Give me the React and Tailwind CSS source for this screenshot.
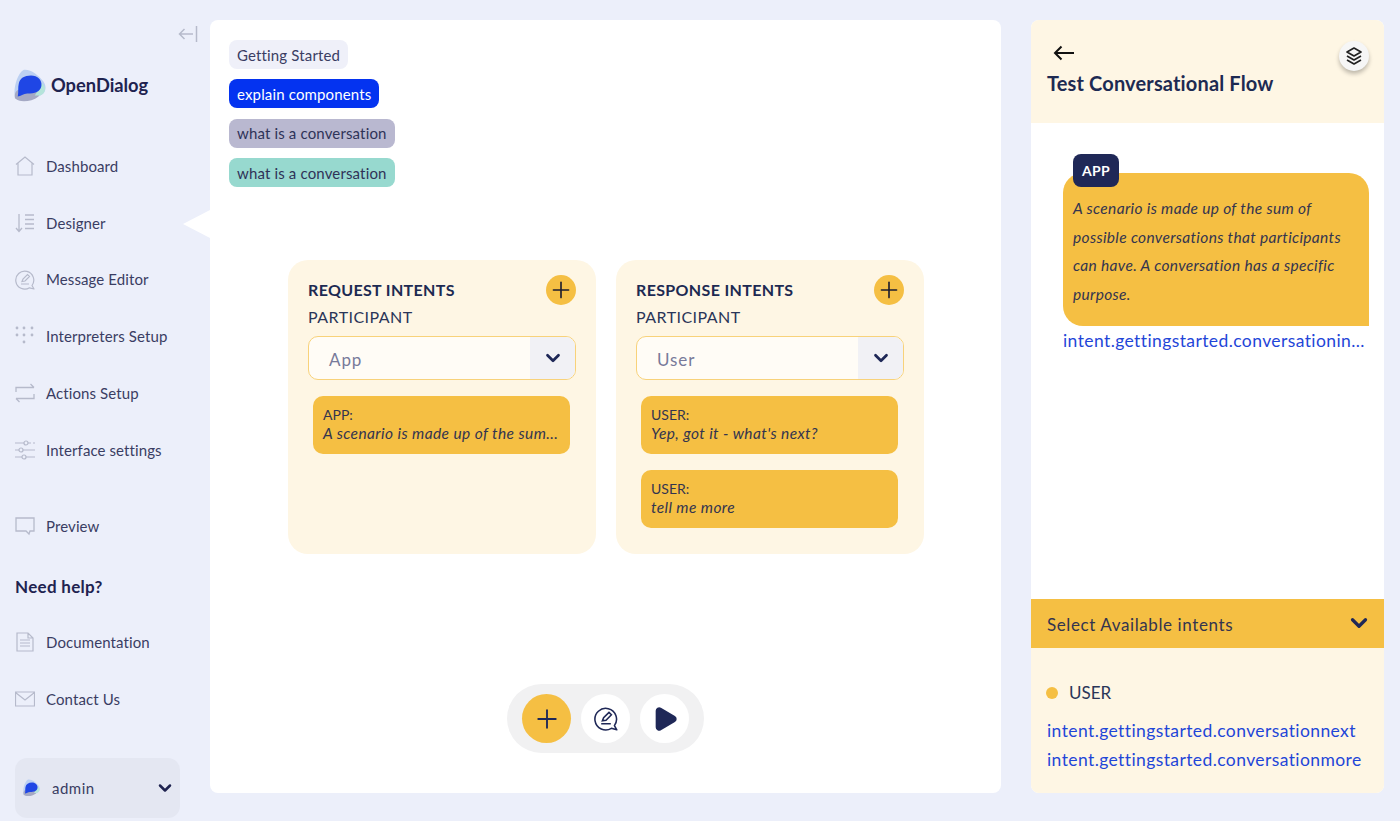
import { ChevronDown, Plus, Play } from 'lucide-react'

function Logo({ size = 36 }) {
  return (
    <svg width={size} height={size} viewBox="0 0 36 36" className="shrink-0">
      <path d="M10 1 C18 0 25 6 31 13 C36 20 33 28 24 29 C15 33 5 36 1 30 C-1 22 3 5 10 1Z" fill="#bcd0f2" />
      <path d="M1 31 C0 24 4 20 10 22 C18 22 30 22 26 29 C18 35 6 36 1 31Z" fill="#a5a9c4" />
      <path d="M30 15 C34 19 34 25 28 28 L22 28 Z" fill="#b5e4da" />
      <path d="M18 7 C25 7 30 12 29 18 C28 24 22 26 14 26 C10 26 7 29 4 29 C5 24 4 20 5 16 C6 10 11 7 18 7Z" fill="#1f46e5" />
    </svg>
  )
}

function HouseIcon() {
  return (
    <svg width="20" height="20" viewBox="0 0 20 20" fill="none" stroke="#b6bacb" strokeWidth="1.2">
      <path d="M1 8.5 10 1l9 7.5M3 7v12h14V7" />
    </svg>
  )
}
function DesignerIcon() {
  return (
    <svg width="20" height="20" viewBox="0 0 20 20" fill="none" stroke="#b6bacb" strokeWidth="1.3">
      <path d="M4 1v17M1 15l3 3.5L7 15M10 2h9M10 6.5h9M10 11h9M10 15.5h9" />
    </svg>
  )
}
function MessageIcon({ color = '#b6bacb', size = 20, w = 1.2 }) {
  return (
    <svg width={size} height={size} viewBox="0 0 20 20" fill="none" stroke={color} strokeWidth={w}>
      <path d="M17 15.5A9 9 0 1 0 14.5 17.8L19 19Z" strokeLinejoin="round" />
      <path d="M6 14h8M7 11.5l1-2.5 4.5-4.5 2 2L10 11Z" />
    </svg>
  )
}
function DotsIcon() {
  return (
    <svg width="20" height="20" viewBox="0 0 20 20" fill="#b6bacb">
      {[1.5, 8.5, 16.5].map(x => <circle key={x} cx={x + 0.5} cy="2" r="1.4" />)}
      {[1.5, 8.5, 16.5].map(x => <circle key={x} cx={x + 0.5} cy="9" r="1.4" />)}
      <circle cx="9" cy="16" r="1.4" />
    </svg>
  )
}
function SwapIcon() {
  return (
    <svg width="20" height="20" viewBox="0 0 20 20" fill="none" stroke="#b6bacb" strokeWidth="1.3">
      <path d="M1 9V4.5h18M15.5 1 19 4.5 M19 11v4.5H1M4.5 19 1 15.5" />
    </svg>
  )
}
function SlidersIcon() {
  return (
    <svg width="20" height="20" viewBox="0 0 20 20" fill="none" stroke="#b6bacb" strokeWidth="1.2">
      <path d="M0 3h9M13 3h3M18 3h2M0 10h4M8 10h12M0 17h7M11 17h9" />
      <circle cx="11" cy="3" r="2" /><circle cx="6" cy="10" r="2" /><circle cx="9" cy="17" r="2" />
    </svg>
  )
}
function ChatIcon() {
  return (
    <svg width="20" height="20" viewBox="0 0 20 20" fill="none" stroke="#b6bacb" strokeWidth="1.3">
      <path d="M1 2h18v13h-4l-1 3-3-3H1Z" />
    </svg>
  )
}
function DocIcon() {
  return (
    <svg width="20" height="20" viewBox="0 0 20 20" fill="none" stroke="#b6bacb" strokeWidth="1.2">
      <path d="M2 1h11l5 5v13H2ZM13 1v5h5M5 8h10M5 11h10M5 14h10" />
    </svg>
  )
}
function MailIcon() {
  return (
    <svg width="20" height="20" viewBox="0 0 20 20" fill="none" stroke="#b6bacb" strokeWidth="1.2">
      <path d="M0.5 3h19v14H0.5ZM0.5 3.5 10 11l9.5-7.5" />
    </svg>
  )
}
function StackIcon() {
  return (
    <svg width="18" height="19" viewBox="0 0 18 19" fill="none" stroke="#222" strokeWidth="1.7" strokeLinejoin="round">
      <path d="M9 1 16 5 9 9 2 5Z" />
      <path d="M2 9l7 4 7-4M2 13l7 4 7-4" />
    </svg>
  )
}
function BackArrow() {
  return (
    <svg width="22" height="16" viewBox="0 0 22 16" fill="none" stroke="#111" strokeWidth="2">
      <path d="M21 8H2M8.5 1.5 2 8l6.5 6.5" />
    </svg>
  )
}

function NavItem({ icon, label, className = '' }) {
  return (
    <div className={`flex items-center h-[20px] gap-[11px] pl-[15px] text-[15px] tracking-[0.1px] text-[#3a3d63] ${className}`}>
      {icon}
      <span>{label}</span>
    </div>
  )
}

function Pill({ label, className }) {
  return (
    <div className={`w-fit h-[29px] px-2 pt-px rounded-lg flex items-center text-[15px] tracking-[0.15px] ${className}`}>{label}</div>
  )
}

function Intent({ who, text }) {
  return (
    <div className="ml-[5px] mr-[6px] h-[58px] px-[10px] py-[9px] bg-[#f5bf43] rounded-[10px] text-[14px] leading-[19px] text-[#33344f]">
      <div>{who}</div>
      <div className="italic text-[15.5px] tracking-[0.4px] whitespace-nowrap">{text}</div>
    </div>
  )
}

function IntentCard({ title, value, children }) {
  return (
    <div className="w-[308px] h-[294px] bg-[#fef6e4] rounded-[20px] px-[20px] pt-[17px]">
      <div className="flex items-center justify-between h-[26px]">
        <span className="font-bold text-[16px] tracking-[0.35px] text-[#1d2a52]">{title}</span>
        <span className="w-[30px] h-[30px] rounded-full bg-[#f5bf43] flex items-center justify-center">
          <Plus size={26} strokeWidth={1.5} color="#1c1c2e" />
        </span>
      </div>
      <div className="mt-[2px] mb-px text-[16px] leading-[24px] tracking-[0.45px] text-[#2a3558]">PARTICIPANT</div>
      <div className="mt-[7px] h-[44px] bg-[#fffcf6] border border-[#f8d27a] rounded-[10px] flex items-center overflow-hidden">
        <span className="flex-1 pl-[20px] pt-[3px] text-[17px] tracking-[0.9px] text-[#787a9a]">{value}</span>
        <span className="w-[45px] h-full bg-[#f1f1f5] flex items-center justify-center">
          <ChevronDown size={22} strokeWidth={3} color="#1f2857" />
        </span>
      </div>
      <div className="mt-[16px] flex flex-col gap-[16px]">{children}</div>
    </div>
  )
}

export default function App() {
  return (
    <div className="relative w-[1400px] h-[821px] overflow-hidden bg-[#eceffa] flex font-['Lato','Open_Sans',sans-serif]">
      {/* sidebar */}
      <aside className="w-[210px] shrink-0 flex flex-col">
        <div className="flex justify-end pr-[12px] pt-[26px] h-[44px]">
          <svg width="20" height="16" viewBox="0 0 20 16" fill="none" stroke="#b6bacb" strokeWidth="1.5">
            <path d="M18.5 0v16M15 8H1.5M6.5 3 1.5 8l5 5" />
          </svg>
        </div>
        <div className="mt-[24px] pl-[14px] flex items-center gap-[3px] h-[36px]">
          <Logo size={34} />
          <span className="text-[18.3px] font-bold text-[#1f2350]">OpenDialog</span>
        </div>
        <div className="mt-[52px] flex flex-col gap-[36.8px]">
          <NavItem icon={<HouseIcon />} label="Dashboard" />
          <NavItem icon={<DesignerIcon />} label="Designer" />
          <NavItem icon={<MessageIcon />} label="Message Editor" />
          <NavItem icon={<DotsIcon />} label="Interpreters Setup" />
          <NavItem icon={<SwapIcon />} label="Actions Setup" />
          <NavItem icon={<SlidersIcon />} label="Interface settings" />
        </div>
        <NavItem icon={<ChatIcon />} label="Preview" className="mt-[56px]" />
        <div className="mt-[38px] pl-[15px] h-[24px] text-[17px] tracking-[0.3px] font-bold text-[#1f2350]">Need help?</div>
        <div className="mt-[34px] flex flex-col gap-[37px]">
          <NavItem icon={<DocIcon />} label="Documentation" />
          <NavItem icon={<MailIcon />} label="Contact Us" />
        </div>
        <div className="mt-[49px] ml-[15px] w-[165px] h-[60px] rounded-xl bg-[#e4e7f2] flex items-center pl-[8px] pr-[5px]">
          <Logo size={18} />
          <span className="ml-[11px] flex-1 text-[15px] tracking-[0.5px] text-[#3a3d63]">admin</span>
          <ChevronDown size={20} strokeWidth={3} color="#1f2350" />
        </div>
      </aside>

      {/* notch pointing at the active item */}
      <div className="absolute left-[183px] top-[210px] w-[27px] h-[28px] bg-white [clip-path:polygon(100%_0,100%_100%,0_50%)]" />

      {/* canvas */}
      <main className="mt-[20px] mb-[28px] w-[791px] rounded-lg bg-white flex flex-col pl-[19px] pt-[20px] pb-[40px]">
        <div className="flex flex-col gap-[10.3px]">
          <Pill label="Getting Started" className="bg-[#eff0f9] text-[#3a3d63]" />
          <Pill label="explain components" className="bg-[#0433f0] text-white" />
          <Pill label="what is a conversation" className="bg-[#b9b8d0] text-[#2f3358]" />
          <Pill label="what is a conversation" className="bg-[#97d9cf] text-[#2f3358]" />
        </div>
        <div className="mt-[73px] ml-[59px] flex gap-[20px]">
          <IntentCard title="REQUEST INTENTS" value="App">
            <Intent who="APP:" text="A scenario is made up of the sum..." />
          </IntentCard>
          <IntentCard title="RESPONSE INTENTS" value="User">
            <Intent who="USER:" text="Yep, got it - what's next?" />
            <Intent who="USER:" text="tell me more" />
          </IntentCard>
        </div>
        <div className="mt-auto ml-[278px] w-[197px] h-[69px] rounded-full bg-[#f1f1f2] flex items-center pl-[15px] gap-[10px]">
          <span className="w-[49px] h-[49px] rounded-full bg-[#f5bf43] flex items-center justify-center">
            <Plus size={30} strokeWidth={1.5} color="#1f2857" />
          </span>
          <span className="w-[49px] h-[49px] rounded-full bg-white flex items-center justify-center">
            <MessageIcon color="#1f2857" size={24} w={1.3} />
          </span>
          <span className="w-[49px] h-[49px] rounded-full bg-white flex items-center justify-center">
            <Play size={28} fill="#1f2857" color="#1f2857" strokeWidth={2} />
          </span>
        </div>
      </main>

      {/* right panel */}
      <section className="ml-[30px] mt-[20px] mb-[28px] w-[353px] rounded-lg overflow-hidden bg-white flex flex-col">
        <div className="relative h-[103px] bg-[#fef6e4] pl-[16px] pt-[25px]">
          <div className="ml-[6px] h-[16px]"><BackArrow /></div>
          <div className="mt-[7px] text-[20px] font-bold tracking-[0.15px] text-[#1d2a52]">Test Conversational Flow</div>
          <span className="absolute right-[15px] top-[21px] w-[30px] h-[30px] rounded-full bg-[#f6f6f6] shadow-[0_3px_4px_rgba(0,0,0,0.25)] flex items-center justify-center">
            <StackIcon />
          </span>
        </div>
        <div className="flex-1 pl-[32px] pr-[15px] pt-[31px]">
          <div className="relative ml-[10px] w-fit h-[33px] z-10 px-[9px] bg-[#1f2857] rounded-lg flex items-center text-[14px] tracking-[0.3px] font-bold text-white">APP</div>
          <div className="-mt-[14px] h-[153px] bg-[#f5bf43] rounded-t-[20px] rounded-bl-[20px] pl-[10px] pr-[14px] pt-[21px] text-[15.5px] tracking-[0.33px] leading-[28.5px] italic text-[#33344f]">
            A scenario is made up of the sum of possible conversations that participants can have. A conversation has a specific purpose.
          </div>
          <div className="mt-[3px] text-[17.5px] leading-[24px] tracking-[0.4px] text-[#1f46d8] truncate">intent.gettingstarted.conversationin...</div>
        </div>
        <div className="h-[49px] bg-[#f5bf43] pl-[16px] pr-[12px] pt-[2px] flex items-center justify-between">
          <span className="text-[17px] tracking-[0.6px] text-[#33344f]">Select Available intents</span>
          <ChevronDown size={26} strokeWidth={3} color="#1f2857" className="-mt-1" />
        </div>
        <div className="h-[145px] bg-[#fef6e4] pl-[15px] pt-[33px]">
          <div className="flex items-center gap-[11px] text-[17px] leading-[24px] text-[#2a3558]">
            <span className="w-[12px] h-[12px] rounded-full bg-[#f5bf43]" />
            USER
          </div>
          <div className="mt-[12px] ml-px text-[17.5px] leading-[28.5px] tracking-[0.4px] text-[#1f46d8]">
            <div>intent.gettingstarted.conversationnext</div>
            <div>intent.gettingstarted.conversationmore</div>
          </div>
        </div>
      </section>
    </div>
  )
}
